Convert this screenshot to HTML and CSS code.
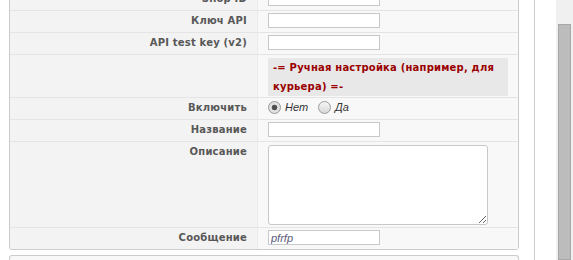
FILE: index.html
```html
<!DOCTYPE html>
<html lang="ru">
<head>
    <meta charset="UTF-8">
    <title>Настройки доставки</title>
    <link rel="stylesheet" href="styles.css">
</head>
<body>
    <div class="page">
        <div class="content">
            <table class="settings">
                <tr>
                    <td class="key">Shop ID</td>
                    <td class="val"><input class="field" type="text"></td>
                </tr>
                <tr>
                    <td class="key">Ключ API</td>
                    <td class="val"><input class="field" type="text"></td>
                </tr>
                <tr>
                    <td class="key">API test key (v2)</td>
                    <td class="val"><input class="field" type="text"></td>
                </tr>
                <tr>
                    <td class="key"></td>
                    <td class="val"><div class="section-title">-= Ручная настройка (например, для курьера) =-</div></td>
                </tr>
                <tr>
                    <td class="key">Включить</td>
                    <td class="val">
                        <div class="opts">
                            <label class="opt"><input type="radio" name="enabled" checked>Нет</label>
                            <label class="opt"><input type="radio" name="enabled">Да</label>
                        </div>
                    </td>
                </tr>
                <tr>
                    <td class="key">Название</td>
                    <td class="val"><input class="field" type="text"></td>
                </tr>
                <tr>
                    <td class="key">Описание</td>
                    <td class="val"><textarea class="area"></textarea></td>
                </tr>
                <tr>
                    <td class="key">Сообщение</td>
                    <td class="val"><input class="field msg" type="text" value="pfrfp"></td>
                </tr>
            </table>
            <div class="next-box"></div>
        </div>
        <div class="side"></div>
    </div>
    <div class="scrollbar">
        <div class="thumb"></div>
    </div>
</body>
</html>
```

FILE: styles.css
```css
body {
    margin: 0;
    height: 260px;
    overflow: hidden;
    display: flex;
    background: #fff;
    font-family: "DejaVu Sans", Verdana, sans-serif;
}

.page {
    flex: 1;
    display: flex;
}

.content {
    width: 509px;
    padding-left: 9px;
    border-right: 1px solid #ccc;
    padding-right: 16px;
}

.side {
    flex: 1;
}

.settings {
    width: 510px;
    margin-top: -12px;
    border-collapse: separate;
    border-spacing: 0;
    border: 1px solid #ccc;
    border-radius: 3px;
    background: #f3f3f3;
}

.settings td {
    border-top: 1px solid #e4e4e4;
    padding: 2px 10px 4px 10px;
    vertical-align: top;
    font-size: 10px;
    line-height: 15px;
}

.settings tr:first-child td {
    border-top: none;
}

.key {
    width: 227px;
    text-align: right;
    font-weight: bold;
    color: #585858;
    letter-spacing: 0.2px;
    border-right: 1px solid #ececec;
}

.val {
    background: #f8f8f8;
}

.field {
    display: block;
    box-sizing: border-box;
    width: 112px;
    height: 15px;
    margin: 0;
    padding: 0 2px;
    border: 1px solid #c8c8c8;
    background: #fff;
    font-family: "Liberation Sans", Arial, sans-serif;
    font-size: 11px;
}

.msg {
    font-style: italic;
    color: #5a5a78;
}

.section-title {
    margin: 1px 0 -3px 0;
    padding: 0 5px;
    width: 230px;
    background: #e8e8e8;
    color: #9a0000;
    font-size: 10px;
    font-weight: bold;
    line-height: 19px;
    letter-spacing: 0.2px;
}

.opts {
    display: flex;
    gap: 10px;
}

.opt {
    display: flex;
    align-items: center;
    gap: 4px;
    font-family: "Liberation Sans", Arial, sans-serif;
    font-style: italic;
    font-size: 11px;
    color: #333;
    line-height: 15px;
}

.opt input {
    appearance: none;
    margin: 0;
    width: 13px;
    height: 13px;
    border: 1px solid #9a9a9a;
    border-radius: 50%;
    box-sizing: border-box;
    background: linear-gradient(#f6f6f6, #d8d8d8);
}

.opt input:checked {
    background: radial-gradient(circle, #4a4a4a 0, #555 2.5px, #e6e6e6 3.2px, #d4d4d4 100%);
}

.area {
    display: block;
    box-sizing: border-box;
    width: 220px;
    height: 80px;
    margin: 1px 0 -2px 0;
    border: 1px solid #c8c8c8;
    border-radius: 3px;
    background: #fff;
}

.next-box {
    width: 508px;
    height: 4px;
    margin-top: 5px;
    border: 1px solid #ccc;
    border-bottom: none;
    border-radius: 3px 3px 0 0;
    background: #f8f8f8;
}

.scrollbar {
    width: 17px;
    background: #f0f0f0;
    padding-top: 24px;
    box-sizing: border-box;
}

.thumb {
    margin-left: 2px;
    width: 13px;
    height: 236px;
    box-sizing: border-box;
    background: #bcbcbc;
    border: 1px solid #a8a8a8;
}
```
